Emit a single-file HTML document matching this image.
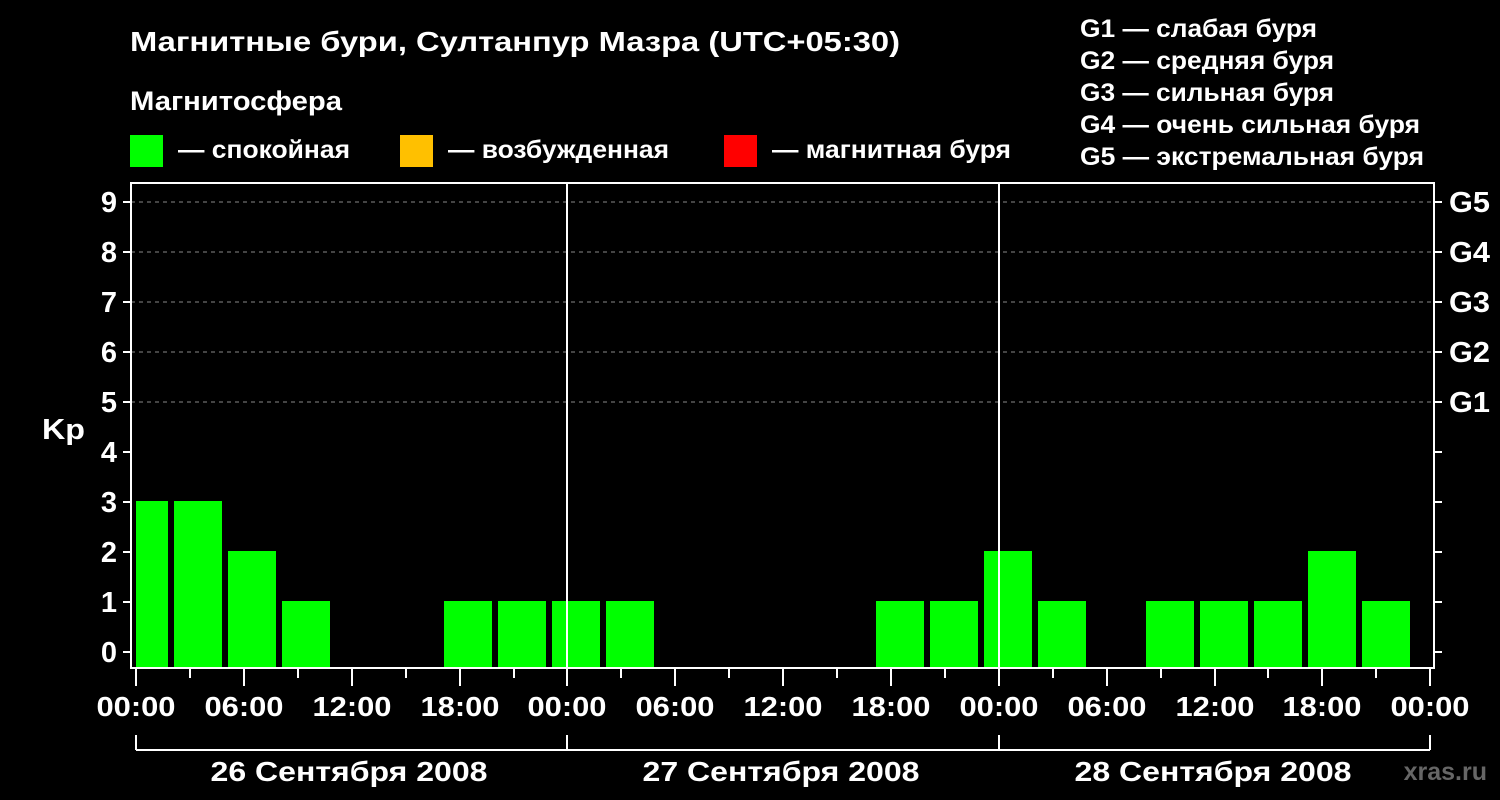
<!DOCTYPE html><html><head><meta charset="utf-8"><style>body{margin:0;background:#000}svg{display:block}text{font-family:"Liberation Sans",sans-serif;font-weight:bold;fill:#fff}</style></head><body>
<svg width="1500" height="800" viewBox="0 0 1500 800">
<rect width="1500" height="800" fill="#000"/>
<text x="130" y="51" font-size="28" textLength="770" lengthAdjust="spacingAndGlyphs">Магнитные бури, Султанпур Мазра (UTC+05:30)</text>
<text x="130" y="110" font-size="27" textLength="212" lengthAdjust="spacingAndGlyphs">Магнитосфера</text>
<rect x="130" y="135" width="33" height="32" fill="#00ff00"/><text x="178" y="158" font-size="25" textLength="172" lengthAdjust="spacingAndGlyphs">— спокойная</text>
<rect x="400" y="135" width="33" height="32" fill="#ffc000"/><text x="448" y="158" font-size="25" textLength="221" lengthAdjust="spacingAndGlyphs">— возбужденная</text>
<rect x="724" y="135" width="33" height="32" fill="#ff0000"/><text x="772" y="158" font-size="25" textLength="239" lengthAdjust="spacingAndGlyphs">— магнитная буря</text>
<g font-size="25"><text x="1080" y="37" textLength="237" lengthAdjust="spacingAndGlyphs">G1 — слабая буря</text><text x="1080" y="69" textLength="254" lengthAdjust="spacingAndGlyphs">G2 — средняя буря</text><text x="1080" y="101" textLength="254" lengthAdjust="spacingAndGlyphs">G3 — сильная буря</text><text x="1080" y="133" textLength="340" lengthAdjust="spacingAndGlyphs">G4 — очень сильная буря</text><text x="1080" y="165" textLength="344" lengthAdjust="spacingAndGlyphs">G5 — экстремальная буря</text></g>
<g stroke="#888" stroke-dasharray="4,4" stroke-width="1">
<line x1="131" y1="202" x2="1434" y2="202"/><line x1="131" y1="252" x2="1434" y2="252"/><line x1="131" y1="302" x2="1434" y2="302"/><line x1="131" y1="352" x2="1434" y2="352"/><line x1="131" y1="402" x2="1434" y2="402"/></g>
<g fill="#00ff00">
<rect x="136" y="501" width="32" height="167"/><rect x="174" y="501" width="48" height="167"/><rect x="228" y="551" width="48" height="117"/><rect x="282" y="601" width="48" height="67"/>
<rect x="444" y="601" width="48" height="67"/><rect x="498" y="601" width="48" height="67"/><rect x="552" y="601" width="48" height="67"/><rect x="606" y="601" width="48" height="67"/>
<rect x="876" y="601" width="48" height="67"/><rect x="930" y="601" width="48" height="67"/><rect x="984" y="551" width="48" height="117"/><rect x="1038" y="601" width="48" height="67"/>
<rect x="1146" y="601" width="48" height="67"/><rect x="1200" y="601" width="48" height="67"/><rect x="1254" y="601" width="48" height="67"/><rect x="1308" y="551" width="48" height="117"/><rect x="1362" y="601" width="48" height="67"/></g>
<g stroke="#fff" stroke-width="2" fill="none">
<rect x="131" y="183" width="1303" height="485"/>
<line x1="567" y1="183" x2="567" y2="668"/><line x1="999" y1="183" x2="999" y2="668"/>
<path d="M123 202h8M123 252h8M123 302h8M123 352h8M123 402h8M123 452h8M123 502h8M123 552h8M123 602h8M123 652h8"/>
<path d="M1434 202h8M1434 252h8M1434 302h8M1434 352h8M1434 402h8M1434 452h8M1434 502h8M1434 552h8M1434 602h8M1434 652h8"/>
<path d="M136 668v18M244 668v18M352 668v18M460 668v18M567 668v18M675 668v18M783 668v18M891 668v18M999 668v18M1107 668v18M1215 668v18M1322 668v18M1430 668v18"/>
<path d="M190 668v10M298 668v10M406 668v10M514 668v10M621 668v10M729 668v10M837 668v10M945 668v10M1053 668v10M1161 668v10M1268 668v10M1376 668v10"/>
<path d="M136 735v15M567 735v15M999 735v15M1430 735v15M136 750h1294"/></g>
<g font-size="29" text-anchor="end"><text x="117" y="212">9</text><text x="117" y="262">8</text><text x="117" y="312">7</text><text x="117" y="362">6</text><text x="117" y="412">5</text><text x="117" y="462">4</text><text x="117" y="512">3</text><text x="117" y="562">2</text><text x="117" y="612">1</text><text x="117" y="662">0</text></g>
<text x="42" y="439" font-size="29" textLength="43" lengthAdjust="spacingAndGlyphs">Kp</text>
<g font-size="29"><text x="1449" y="212" textLength="41" lengthAdjust="spacingAndGlyphs">G5</text><text x="1449" y="262" textLength="41" lengthAdjust="spacingAndGlyphs">G4</text><text x="1449" y="312" textLength="41" lengthAdjust="spacingAndGlyphs">G3</text><text x="1449" y="362" textLength="41" lengthAdjust="spacingAndGlyphs">G2</text><text x="1449" y="412" textLength="41" lengthAdjust="spacingAndGlyphs">G1</text></g>
<g font-size="28" text-anchor="middle"><text x="136" y="716" textLength="79" lengthAdjust="spacingAndGlyphs">00:00</text><text x="244" y="716" textLength="79" lengthAdjust="spacingAndGlyphs">06:00</text><text x="352" y="716" textLength="79" lengthAdjust="spacingAndGlyphs">12:00</text><text x="460" y="716" textLength="79" lengthAdjust="spacingAndGlyphs">18:00</text><text x="567" y="716" textLength="79" lengthAdjust="spacingAndGlyphs">00:00</text><text x="675" y="716" textLength="79" lengthAdjust="spacingAndGlyphs">06:00</text><text x="783" y="716" textLength="79" lengthAdjust="spacingAndGlyphs">12:00</text><text x="891" y="716" textLength="79" lengthAdjust="spacingAndGlyphs">18:00</text><text x="999" y="716" textLength="79" lengthAdjust="spacingAndGlyphs">00:00</text><text x="1107" y="716" textLength="79" lengthAdjust="spacingAndGlyphs">06:00</text><text x="1215" y="716" textLength="79" lengthAdjust="spacingAndGlyphs">12:00</text><text x="1322" y="716" textLength="79" lengthAdjust="spacingAndGlyphs">18:00</text><text x="1430" y="716" textLength="79" lengthAdjust="spacingAndGlyphs">00:00</text>
<text x="349" y="781" textLength="277" lengthAdjust="spacingAndGlyphs">26 Сентября 2008</text><text x="781" y="781" textLength="277" lengthAdjust="spacingAndGlyphs">27 Сентября 2008</text><text x="1213" y="781" textLength="277" lengthAdjust="spacingAndGlyphs">28 Сентября 2008</text></g>
<text x="1487" y="780" font-size="25" text-anchor="end" style="fill:#666">xras.ru</text>
</svg></body></html>
